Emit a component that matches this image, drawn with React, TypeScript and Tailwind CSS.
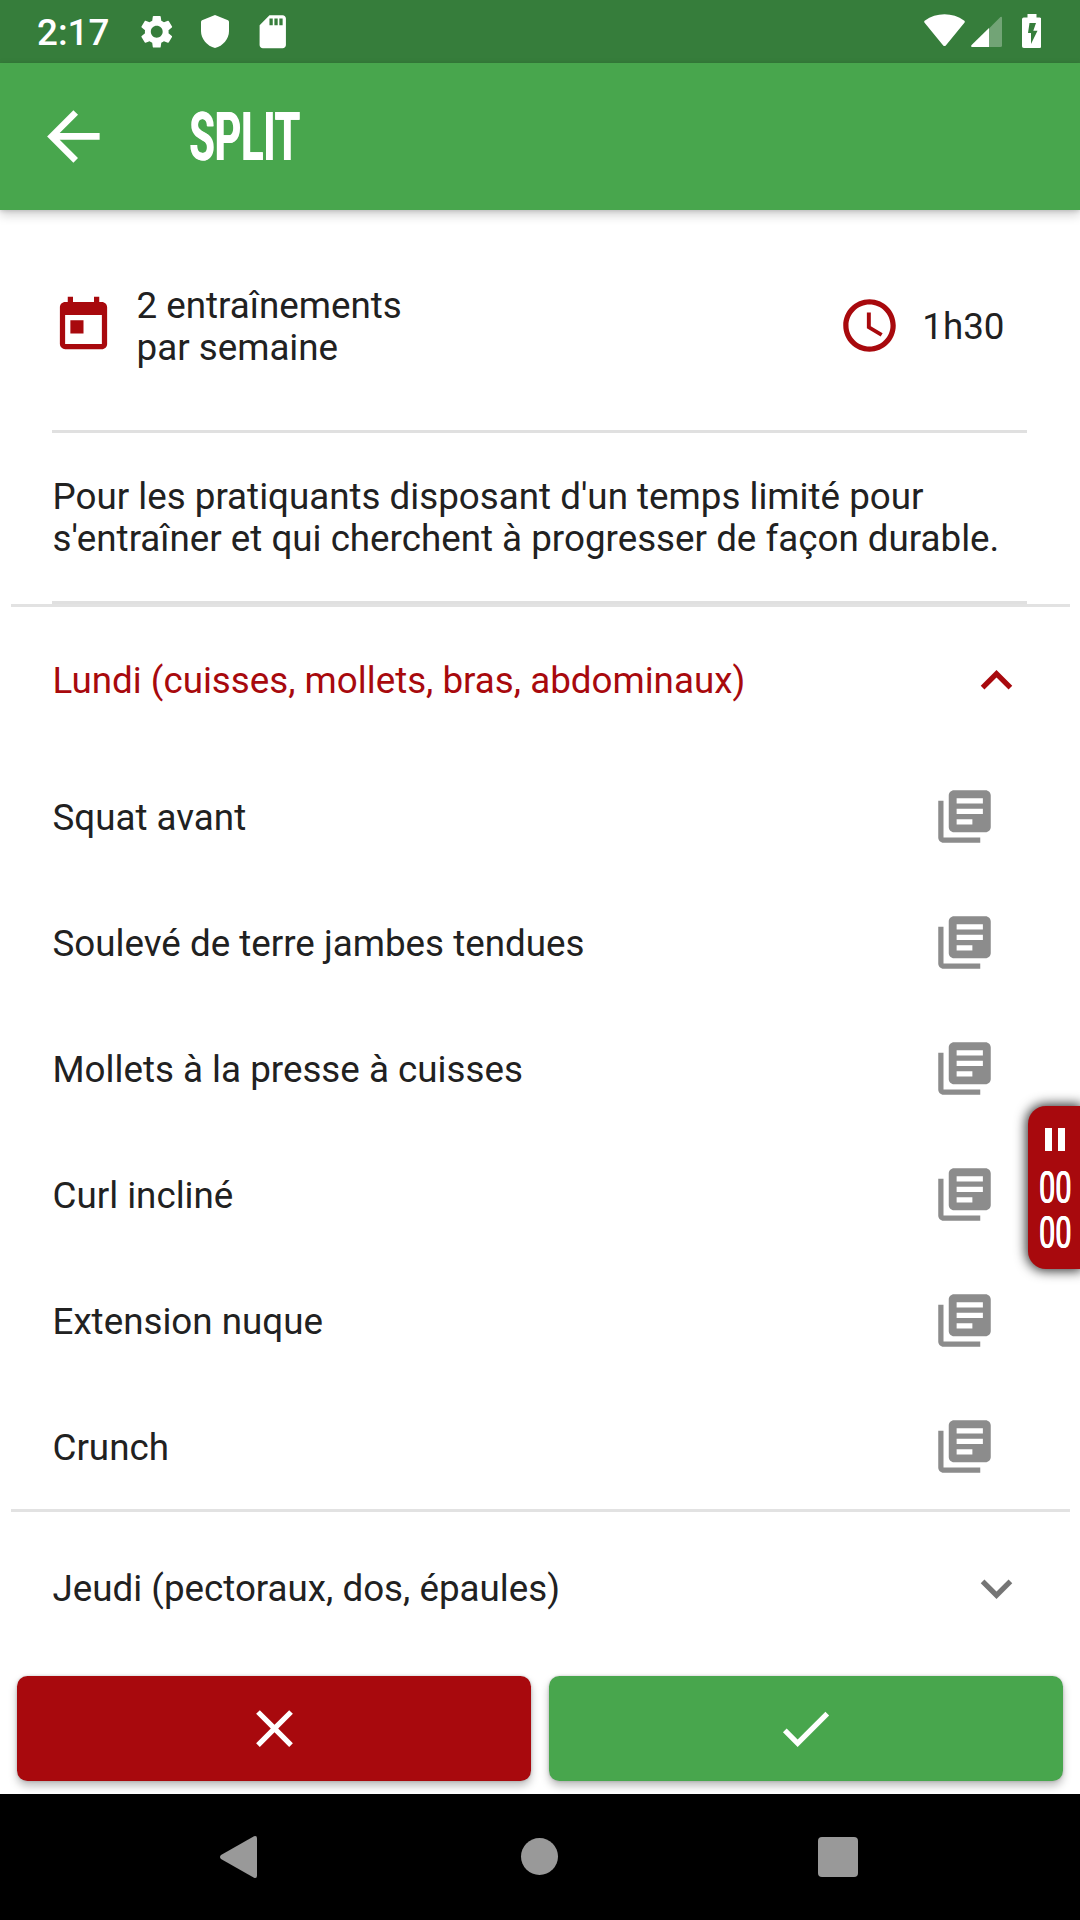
import React from "react";
import {
  MdAccessTime,
  MdArrowBack,
  MdCheck,
  MdClose,
  MdExpandLess,
  MdExpandMore,
  MdLibraryBooks,
  MdSdCard,
  MdSettings,
  MdToday,
} from "react-icons/md";

const exercises = [
  "Squat avant",
  "Soulevé de terre jambes tendues",
  "Mollets à la presse à cuisses",
  "Curl incliné",
  "Extension nuque",
  "Crunch",
];

function StatusBar() {
  return (
    <div className="flex h-[63px] items-center bg-[#367d3b] pl-[37px] pr-[39px] text-white">
      <span className="w-[97px] pt-[4px] text-[36.75px] font-medium leading-none">2:17</span>
      <MdSettings className="ml-[3px] size-[39.5px]" />
      <svg className="ml-[24px] h-[33px] w-[28px]" viewBox="0 0 28 33" fill="currentColor">
        <path d="M14 0 27 5.2Q28 5.7 28 7v9c0 8-6 15-14 17C6 31 0 24 0 16V7Q0 5.7 1 5.2z" />
      </svg>
      <MdSdCard className="ml-[24px] size-[39.5px]" />
      <svg className="ml-auto h-[33px] w-[41px] -translate-y-px" viewBox="0 0 41 33" fill="currentColor">
        <path d="M.6 8.8Q-.4 7.5 1 6.5C12-2 29-2 40 6.5Q41.4 7.5 40.4 8.8L21.8 31.4Q20.5 32.8 19.2 31.4z" />
      </svg>
      <svg className="ml-[6px] h-[31px] w-[31px]" viewBox="0 0 31 31" fill="currentColor">
        <path opacity=".3" d="M18 12.5 29.4 1Q31 0 31 2v27.5q0 1.5-1.5 1.5H18z" />
        <path d="M18 12V31H1Q-.5 30.6.6 29z" />
      </svg>
      <svg className="ml-[20px] h-[34px] w-[19.5px] -translate-y-px" viewBox="0 0 19.5 34" fill="currentColor">
        <path
          fillRule="evenodd"
          d="M5.5 0h9v3.5h3.2q1.8 0 1.8 1.8v26.9q0 1.8-1.8 1.8H1.8Q0 34 0 32.2V5.3q0-1.800 1.8-1.8h3.700zM7.5 9 6 19h3v11l6.500-13.300h-4.200L14 9z"
        />
      </svg>
    </div>
  );
}

function AppBar() {
  return (
    <header className="relative z-10 flex h-[147px] items-center bg-[#48a64d] pl-[34px] text-white shadow-[0_5px_10px_rgba(0,0,0,0.18),0_1px_4px_rgba(0,0,0,0.14)]">
      <MdArrowBack className="size-[78.75px]" />
      <h1 className="ml-[76px] origin-left scale-x-[0.62] whitespace-nowrap pt-[2px] text-[66.5px] font-bold leading-none tracking-[-0.2px] [text-shadow:1.2px_0_currentColor]">
        SPLIT
      </h1>
    </header>
  );
}

function Timer() {
  return (
    <div className="absolute right-0 top-[1106px] flex h-[163px] w-[52.5px] flex-col items-center rounded-l-[18px] bg-[#a8090d] pl-[3px] pt-[22px] text-white shadow-[0_0_12px_2px_rgba(0,0,0,0.8)]">
      <div className="flex gap-[6px]">
        <span className="h-[23px] w-[7px] bg-white" />
        <span className="h-[23px] w-[7px] bg-white" />
      </div>
      <div className="mt-[13.5px] scale-x-[0.64] text-center text-[45px] font-normal leading-[45px] [text-shadow:0.6px_0_currentColor,-0.6px_0_currentColor]">
        <div>00</div>
        <div>00</div>
      </div>
    </div>
  );
}

export default function App() {
  return (
    <div className="relative flex h-[1920px] w-[1080px] flex-col overflow-hidden bg-white font-['Roboto',sans-serif] text-[36.75px] leading-[42px] text-[#212121]">
      <StatusBar />
      <AppBar />

      <main className="flex flex-1 flex-col">
        <section className="ml-[52px] mr-[53px] flex h-[223px] items-center justify-between border-b-[3px] border-[#e0e0e0] pr-[22.5px] pt-[11px]">
          <div className="flex items-center">
            <MdToday className="size-[63px] text-[#a8090d]" />
            <p className="ml-[21.5px] pt-[2px]">
              2 entraînements
              <br />
              par semaine
            </p>
          </div>
          <div className="flex items-center">
            <MdAccessTime className="size-[63px] text-[#a8090d]" />
            <span className="ml-[21px] pt-[2px]">1h30</span>
          </div>
        </section>

        <p className="ml-[52px] mr-[53px] flex h-[171px] items-center whitespace-nowrap border-b-[3px] border-[#e0e0e0] pl-[0.5px] pt-[2px]">
          Pour les pratiquants disposant d'un temps limité pour
          <br />
          s'entraîner et qui cherchent à progresser de façon durable.
        </p>

        <section className="mx-[10.5px] border-t-[3px] border-[#e2e2e2]">
          <div className="flex h-[146px] items-center justify-between pl-[42px] pr-[42px] pt-[1px] text-[#a8090d]">
            <span>Lundi (cuisses, mollets, bras, abdominaux)</span>
            <MdExpandLess className="size-[63px]" />
          </div>
          <ul>
            {exercises.map((name) => (
              <li key={name} className="flex h-[126px] items-center justify-between pl-[42px] pr-[73.5px]">
                <span className="pt-[4px]">{name}</span>
                <MdLibraryBooks className="size-[63px] text-[#8c8c8c]" />
              </li>
            ))}
          </ul>
        </section>

        <section className="mx-[10.5px] border-t-[3px] border-[#e2e2e2]">
          <div className="flex h-[153px] items-center justify-between pl-[42px] pr-[42px]">
            <span>Jeudi (pectoraux, dos, épaules)</span>
            <MdExpandMore className="size-[63px] text-[#757575]" />
          </div>
        </section>
      </main>

      <footer className="flex h-[118px] gap-[17.5px] pl-[17px] pr-[17.5px] text-white">
        <button className="flex h-[105px] flex-1 items-center justify-center rounded-[10.5px] bg-[#a8090d] shadow-[0_5px_8px_rgba(0,0,0,0.26),0_0_3px_rgba(0,0,0,0.2)]">
          <MdClose className="size-[63px]" />
        </button>
        <button className="flex h-[105px] flex-1 items-center justify-center rounded-[10.5px] bg-[#48a64d] shadow-[0_5px_8px_rgba(0,0,0,0.26),0_0_3px_rgba(0,0,0,0.2)]">
          <MdCheck className="size-[63px]" />
        </button>
      </footer>

      <nav className="relative flex h-[126px] items-center bg-black pl-[220px] text-[#999999]">
        <svg className="h-[42px] w-[37px]" viewBox="0 0 37 42" fill="currentColor">
          <path d="M34 .3q3-.9 3 2v37.4q0 2.9-3 2L1 23q-2-2 0-4z" />
        </svg>
        <span className="ml-[264px] h-[37px] w-[37px] -translate-y-px rounded-full bg-current" />
        <span className="ml-[260px] h-[40px] w-[39.5px] rounded-[4px] bg-current" />
      </nav>

      <Timer />
    </div>
  );
}
